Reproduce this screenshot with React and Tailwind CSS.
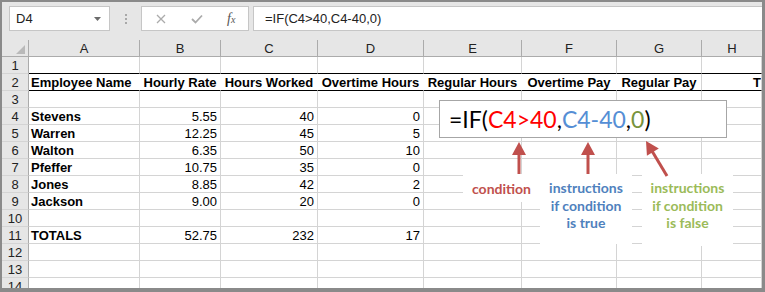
import React from "react";

const COLS = [111, 81, 97, 106, 98, 95, 85, 60];
const LETTERS = ["A", "B", "C", "D", "E", "F", "G", "H"];

const ROWS = [
  { n: 1, line: true },
  {
    n: 2,
    head: true,
    line: true,
    cells: ["Employee Name", "Hourly Rate", "Hours Worked", "Overtime Hours", "Regular Hours", "Overtime Pay", "Regular Pay", "T"],
  },
  { n: 3 },
  { n: 4, cells: ["Stevens", "5.55", "40", "0"] },
  { n: 5, cells: ["Warren", "12.25", "45", "5"] },
  { n: 6, cells: ["Walton", "6.35", "50", "10"] },
  { n: 7, cells: ["Pfeffer", "10.75", "35", "0"] },
  { n: 8, cells: ["Jones", "8.85", "42", "2"] },
  { n: 9, cells: ["Jackson", "9.00", "20", "0"] },
  { n: 10 },
  { n: 11, cells: ["TOTALS", "52.75", "232", "17"] },
  { n: 12 },
  { n: 13 },
  { n: 14 },
];

const Toolbar = () => (
  <div className="flex h-[38px] shrink-0 items-start pt-[4px] text-[13px] text-[#222]">
    <div className="ml-[7px] flex h-[25px] w-[101px] items-center justify-between border border-[#c6c6c6] bg-white pl-[6px] pr-[8px]">
      <span>D4</span>
      <svg width="7" height="4" viewBox="0 0 7 4">
        <path d="M0 0h7L3.5 4z" fill="#6b6b6b" />
      </svg>
    </div>
    <div className="flex h-[25px] w-[31px] flex-col items-center justify-center gap-[2px]">
      <span className="h-[2px] w-[2px] bg-[#a8a8a8]" />
      <span className="h-[2px] w-[2px] bg-[#a8a8a8]" />
      <span className="h-[2px] w-[2px] bg-[#a8a8a8]" />
    </div>
    <div className="flex h-[25px] w-[108px] items-center border border-[#c6c6c6] bg-white">
      <svg className="ml-[14px]" width="10" height="10" viewBox="0 0 10 10">
        <path d="M1 1l8 8M9 1l-8 8" stroke="#ababab" strokeWidth="1.3" />
      </svg>
      <svg className="ml-[25px]" width="12" height="10" viewBox="0 0 12 10">
        <path d="M1 5l3.5 3.5L11 1.5" stroke="#ababab" strokeWidth="1.8" fill="none" />
      </svg>
      <span className="ml-[24px] font-['Liberation_Serif'] text-[14px] italic text-[#555]">
        f<span className="text-[10px]">x</span>
      </span>
    </div>
    <div className="ml-[4px] flex h-[25px] flex-1 items-center border border-r-0 border-[#c6c6c6] bg-white pl-[11px]">
      =IF(C4&gt;40,C4-40,0)
    </div>
  </div>
);

const HeaderRow = () => (
  <div className="flex h-[17px] shrink-0 border-b border-[#ababab] text-[13px] text-[#222]">
    <div className="relative w-[27px] shrink-0 border-r border-[#ababab]">
      <svg className="absolute bottom-[2px] right-[3px]" width="9" height="9" viewBox="0 0 9 9">
        <path d="M9 0v9H0z" fill="#b9b9b9" />
      </svg>
    </div>
    {COLS.map((w, i) => (
      <div
        key={i}
        style={{ width: w }}
        className={`flex shrink-0 items-center justify-center leading-none ${i < 7 ? "border-r border-[#ababab]" : ""}`}
      >
        {LETTERS[i]}
      </div>
    ))}
  </div>
);

const Row = ({ row }) => {
  const cells = row.cells || [];
  return (
    <div className="flex h-[17px] shrink-0 text-[13px] leading-none">
      <div className="flex w-[27px] shrink-0 items-center justify-center border-r border-b border-r-[#ababab] border-b-[#d4d4d4] text-[#222]">
        {row.n}
      </div>
      {COLS.map((w, i) => {
        const txt = cells[i] || "";
        let align = "justify-end pr-[3px]";
        if (i === 0) align = "justify-start pl-[2px] font-bold";
        if (row.head && i > 0) align = "justify-center font-bold";
        if (row.head && i === 7) align = "justify-end pr-[0px] font-bold";
        const vline = row.head && i < 6 ? "border-r-white" : "border-r-[#d4d4d4]";
        const hline = row.line ? "border-b-black" : "border-b-[#d4d4d4]";
        return (
          <div
            key={i}
            style={{ width: w }}
            className={`flex shrink-0 items-center overflow-hidden whitespace-nowrap border-r border-b bg-white text-black ${vline} ${hline} ${align}`}
          >
            {txt}
          </div>
        );
      })}
    </div>
  );
};

const Callouts = () => (
  <>
    <div className="absolute left-[439px] top-[100px] flex h-[38px] w-[288px] items-center border border-[#a6a6a6] bg-white pl-[9px] font-['Lato'] text-[23px] text-black">
      =IF(<span className="text-[#ff0000]">C4&gt;40</span>,<span className="text-[#558ed5]">C4-40</span>,
      <span className="text-[#77933c]">0</span>)
    </div>
    <div className="absolute left-[463px] top-[174px] flex h-[28px] w-[77px] items-center justify-center bg-white font-['Lato'] text-[14px] font-bold text-[#c0504d]">
      condition
    </div>
    <div className="absolute left-[540px] top-[174px] h-[70px] w-[92px] bg-white pt-[5px] text-center font-['Lato'] text-[14px] font-bold leading-[17.5px] text-[#4f81bd]">
      instructions
      <br />
      if condition
      <br />
      is true
    </div>
    <div className="absolute left-[642px] top-[174px] h-[72px] w-[91px] bg-white pt-[5px] text-center font-['Lato'] text-[14px] font-bold leading-[17.5px] text-[#9bbb59]">
      instructions
      <br />
      if condition
      <br />
      is false
    </div>
    <svg className="pointer-events-none absolute left-0 top-0" width="765" height="292" viewBox="0 0 765 292">
      <g fill="#c0504d" stroke="#c0504d">
        <path d="M519 153V174" strokeWidth="3" />
        <path d="M519 142l7 13h-14z" stroke="none" />
        <path d="M588 153V174" strokeWidth="3" />
        <path d="M588 142l7 13h-14z" stroke="none" />
        <path d="M652 151L667 176" strokeWidth="3" />
        <path d="M646 141L658.8 148.4L646.9 155.7z" stroke="none" />
      </g>
    </svg>
  </>
);

export default function App() {
  return (
    <div className="relative h-[292px] w-[765px] overflow-hidden bg-[#8a8a8a] pb-[4px] pl-[2px] pr-[3px] pt-[2px] font-['Liberation_Sans',Arial,sans-serif]">
      <div className="flex h-full flex-col overflow-hidden bg-[#e6e6e6]">
        <Toolbar />
        <HeaderRow />
        {ROWS.map((r) => (
          <Row key={r.n} row={r} />
        ))}
      </div>
      <Callouts />
    </div>
  );
}
